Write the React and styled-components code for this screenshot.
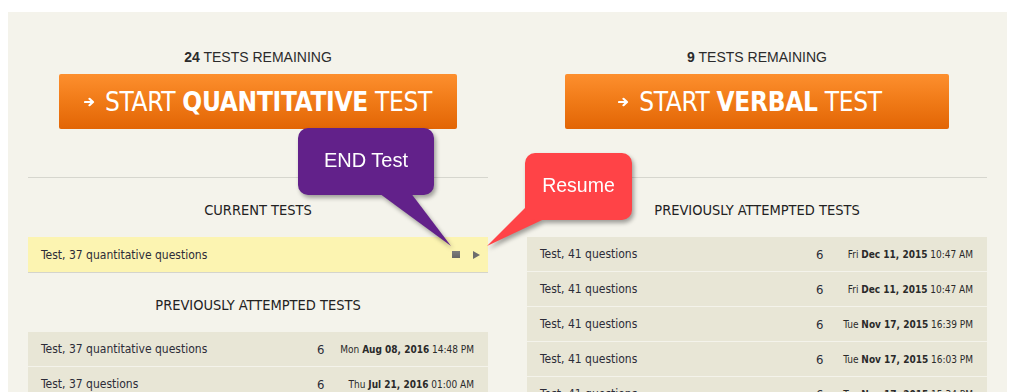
import React from "react";
import styled, { createGlobalStyle } from "styled-components";

const Global = createGlobalStyle`
  html, body { margin: 0; padding: 0; background: #ffffff; }
  body { font-family: "DejaVu Sans Condensed", "DejaVu Sans", sans-serif; font-stretch: condensed; }
`;

const Page = styled.div`
  padding: 12px 2px 0 8px;
  height: 380px;
  overflow: hidden;
`;

const Panel = styled.div`
  position: relative;
  background: #f4f3eb;
  padding: 37px 20px 40px;
  display: grid;
  grid-template-columns: 1fr 1fr;
  column-gap: 39px;
  min-height: 400px;
`;

const Column = styled.div`
  display: flex;
  flex-direction: column;
`;

const Top = styled.div`
  display: flex;
  flex-direction: column;
  align-items: center;
  padding-bottom: 48px;
  border-bottom: 1px solid #d6d6ce;
`;

const Remaining = styled.div`
  font-family: "Liberation Sans", Arial, sans-serif;
  font-stretch: normal;
  font-size: 14px;
  line-height: 16px;
  color: #2b2b2b;
  margin-bottom: 9px;
  b { font-weight: bold; }
`;

const StartButton = styled.button`
  width: ${(p) => p.$width}px;
  height: 55px;
  border: none;
  border-radius: 2px;
  background: linear-gradient(to bottom, #fd8f2e 0%, #f07a17 50%, #e26505 100%);
  color: #ffffff;
  display: flex;
  align-items: center;
  justify-content: center;
  gap: 10px;
  font-family: "DejaVu Sans Condensed", "DejaVu Sans", sans-serif;
  font-stretch: condensed;
  font-size: 26px;
  letter-spacing: -0.3px;
  padding: 0 ${(p) => p.$padR || 0}px 0 0;
  cursor: pointer;
  b { font-weight: bold; }
`;

const Heading = styled.div`
  text-align: center;
  font-size: 14.5px;
  line-height: 18px;
  color: #222;
  padding: 23px 0 18px;
`;

const Row = styled.div`
  display: grid;
  grid-template-columns: 276px auto 1fr;
  align-items: center;
  height: ${(p) => (p.$current ? 35 : 34)}px;
  padding: 0 14px 0 13px;
  background: ${(p) => (p.$current ? "#fcf4b1" : "#e8e6d6")};
  border-bottom: 1px solid ${(p) => (p.$current ? "#d4d4cc" : "#f4f3eb")};
  font-size: 12px;
  color: #2c2c38;
`;

const CurrentRow = styled(Row)`
  grid-template-columns: 1fr auto;
  padding-right: 8px;
`;

const Count = styled.span`
  font-size: 13px;
`;

const DateCell = styled.span`
  text-align: right;
  font-size: 10px;
  color: #2a2a2a;
  b { font-weight: bold; }
`;

const Controls = styled.div`
  display: flex;
  align-items: center;
  gap: 13px;
`;

const StopIcon = styled.span`
  width: 8px;
  height: 7px;
  background: linear-gradient(#7d7d7d, #666);
  display: block;
`;

const PlayIcon = styled.span`
  width: 0;
  height: 0;
  border-top: 4.5px solid transparent;
  border-bottom: 4.5px solid transparent;
  border-left: 7px solid #6d6d6d;
  display: block;
`;

const Callout = styled.div`
  position: absolute;
  left: ${(p) => p.$x}px;
  top: ${(p) => p.$y}px;
  width: ${(p) => p.$w}px;
  height: 67px;
  filter: drop-shadow(2px 3px 2px rgba(0, 0, 0, 0.35));
  z-index: 5;
`;

const CalloutBox = styled.div`
  position: relative;
  z-index: 1;
  width: 100%;
  height: 100%;
  border-radius: 10px;
  background: ${(p) => p.$color};
  color: #fff;
  display: flex;
  align-items: center;
  justify-content: center;
  padding-bottom: 2px;
  box-sizing: border-box;
  font-family: "Liberation Sans", Arial, sans-serif;
  font-stretch: normal;
  font-size: ${(p) => p.$size}px;
`;

const Tail = styled.svg`
  position: absolute;
  left: 0;
  top: 0;
  overflow: visible;
`;

const Arrow = () => (
  <svg width="11" height="10" viewBox="0 0 11 10">
    <path d="M1 5 H8.5 M5.5 1.8 L9 5 L5.5 8.2" stroke="#fff" strokeWidth="2.2" fill="none" strokeLinecap="round" strokeLinejoin="round" />
  </svg>
);

const leftRows = [
  { name: "Test, 37 quantitative questions", day: "Mon", date: "Aug 08, 2016", time: "14:48 PM" },
  { name: "Test, 37 questions", day: "Thu", date: "Jul 21, 2016", time: "01:00 AM" },
];

const rightRows = [
  { name: "Test, 41 questions", day: "Fri", date: "Dec 11, 2015", time: "10:47 AM" },
  { name: "Test, 41 questions", day: "Fri", date: "Dec 11, 2015", time: "10:47 AM" },
  { name: "Test, 41 questions", day: "Tue", date: "Nov 17, 2015", time: "16:39 PM" },
  { name: "Test, 41 questions", day: "Tue", date: "Nov 17, 2015", time: "16:03 PM" },
  { name: "Test, 41 questions", day: "Tue", date: "Nov 17, 2015", time: "15:34 PM" },
];

const HistoryRow = ({ r }) => (
  <Row>
    <span>{r.name}</span>
    <Count>6</Count>
    <DateCell>
      {r.day} <b>{r.date}</b> {r.time}
    </DateCell>
  </Row>
);

export default function App() {
  return (
    <>
      <Global />
      <Page>
        <Panel>
          <Column>
            <Top>
              <Remaining>
                <b>24</b> TESTS REMAINING
              </Remaining>
              <StartButton $width={398}>
                <Arrow />
                <span>
                  START <b>QUANTITATIVE</b> TEST
                </span>
              </StartButton>
            </Top>
            <Heading>CURRENT TESTS</Heading>
            <CurrentRow $current>
              <span>Test, 37 quantitative questions</span>
              <Controls>
                <StopIcon />
                <PlayIcon />
              </Controls>
            </CurrentRow>
            <Heading>PREVIOUSLY ATTEMPTED TESTS</Heading>
            {leftRows.map((r, i) => (
              <HistoryRow key={i} r={r} />
            ))}
          </Column>
          <Column>
            <Top>
              <Remaining>
                <b>9</b> TESTS REMAINING
              </Remaining>
              <StartButton $width={384} $padR={14}>
                <Arrow />
                <span>
                  START <b>VERBAL</b> TEST
                </span>
              </StartButton>
            </Top>
            <Heading>PREVIOUSLY ATTEMPTED TESTS</Heading>
            {rightRows.map((r, i) => (
              <HistoryRow key={i} r={r} />
            ))}
          </Column>

          <Callout $x={290} $y={116} $w={136}>
            <Tail width="1" height="1">
              <polygon points="74,60 109,60 153,118" fill="#62218a" />
            </Tail>
            <CalloutBox $color="#62218a" $size={20}>END Test</CalloutBox>
          </Callout>
          <Callout $x={517} $y={141} $w={107}>
            <Tail width="1" height="1">
              <polygon points="6,49 30,61 -38,93" fill="#ff4347" />
            </Tail>
            <CalloutBox $color="#ff4347" $size={19.5}>Resume</CalloutBox>
          </Callout>
        </Panel>
      </Page>
    </>
  );
}
